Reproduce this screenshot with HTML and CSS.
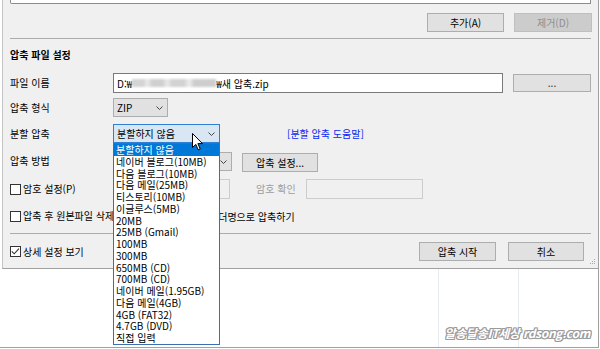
FILE: index.html
```html
<!DOCTYPE html>
<html lang="ko">
<head>
<meta charset="utf-8">
<title>압축 파일 설정</title>
<link rel="stylesheet" href="styles.css">
</head>
<body>
<div class="frame">
  <div class="dialog">
    <div class="listtail"></div>
    <div class="btnrow">
      <div class="btn w77">추가(A)</div>
      <div class="btn w78 disabled">제거(D)</div>
    </div>
    <div class="sep"></div>
    <div class="title">압축 파일 설정</div>
    <div class="form">
      <div class="lbl">파일 이름</div>
      <div class="ctl">
        <div class="input path">D:₩<span class="blur"></span>₩새 압축.zip</div>
        <div class="btn browse">...</div>
      </div>

      <div class="lbl">압축 형식</div>
      <div class="ctl">
        <div class="combo zip"><span>ZIP</span><svg class="chev" width="7" height="4" viewBox="0 0 7 4"><polyline points="0.5,0.5 3.5,3.5 6.5,0.5" fill="none" stroke="#444" stroke-width="1"/></svg></div>
      </div>

      <div class="lbl">분할 압축</div>
      <div class="ctl">
        <div class="combo split">
          <span>분할하지 않음</span><svg class="chev" width="7" height="4" viewBox="0 0 7 4"><polyline points="0.5,0.5 3.5,3.5 6.5,0.5" fill="none" stroke="#444" stroke-width="1"/></svg>
          <ul class="droplist">
            <li class="sel">분할하지 않음</li>
            <li>네이버 블로그(10MB)</li>
            <li>다음 블로그(10MB)</li>
            <li>다음 메일(25MB)</li>
            <li>티스토리(10MB)</li>
            <li>이글루스(5MB)</li>
            <li>20MB</li>
            <li>25MB (Gmail)</li>
            <li>100MB</li>
            <li>300MB</li>
            <li>650MB (CD)</li>
            <li>700MB (CD)</li>
            <li>네이버 메일(1.95GB)</li>
            <li>다음 메일(4GB)</li>
            <li>4GB (FAT32)</li>
            <li>4.7GB (DVD)</li>
            <li>직접 입력</li>
          </ul>
          <svg class="cursor" width="12" height="18" viewBox="0 0 12 18"><path d="M0.5 0.5 L0.5 14.5 L3.8 11.4 L6.2 16.8 L8.2 15.9 L5.9 10.6 L10.5 10.6 Z" fill="#fff" stroke="#000" stroke-width="1" stroke-linejoin="miter"/></svg>
        </div>
        <a class="help">[분할 압축 도움말]</a>
      </div>

      <div class="lbl">압축 방법</div>
      <div class="ctl">
        <div class="combo method"><span></span><svg class="chev" width="7" height="4" viewBox="0 0 7 4"><polyline points="0.5,0.5 3.5,3.5 6.5,0.5" fill="none" stroke="#444" stroke-width="1"/></svg></div>
        <div class="btn opt">압축 설정...</div>
      </div>

      <div class="lbl chk"><span class="cb"></span>암호 설정(P)</div>
      <div class="ctl">
        <div class="input dis pw1"></div>
        <div class="pwlbl">암호 확인</div>
        <div class="input dis pw2"></div>
      </div>

      <div class="lbl chk"><span class="cb"></span>압축 후 원본파일 삭제</div>
      <div class="ctl chk folder"><span class="cb"></span>폴더명으로 압축하기</div>
    </div>
    <div class="sep sep2"></div>
    <div class="footer">
      <div class="chk"><span class="cb on"><svg width="11" height="11" viewBox="0 0 11 11"><path d="M1.8 5.4 L4.2 7.8 L9 2.6" fill="none" stroke="#333" stroke-width="1.1"/></svg></span>상세 설정 보기</div>
      <div class="btns">
        <div class="btn w77">압축 시작</div>
        <div class="btn w76">취소</div>
      </div>
      <svg class="grip" width="6" height="6" viewBox="0 0 6 6"><rect x="4" y="0" width="1" height="1" fill="#a8a8a8"/><rect x="2" y="2" width="1" height="1" fill="#a8a8a8"/><rect x="4" y="2" width="1" height="1" fill="#a8a8a8"/><rect x="0" y="4" width="1" height="1" fill="#a8a8a8"/><rect x="2" y="4" width="1" height="1" fill="#a8a8a8"/><rect x="4" y="4" width="1" height="1" fill="#a8a8a8"/></svg>
    </div>
  </div>
  <div class="below">
    <div class="col c1"></div>
    <div class="col c2"></div>
    <div class="col c3"></div>
    <div class="watermark">알송달송IT세상 rdsong.com</div>
  </div>
</div>
</body>
</html>
```

FILE: styles.css
```css
* { box-sizing: border-box; }
html, body { margin: 0; padding: 0; background: #fff; }
body {
  font-family: "Noto Sans CJK KR", "Noto Sans", sans-serif;
  font-size: 10px;
  color: #000;
  width: 600px;
  height: 349px;
  overflow: hidden;
}
.frame {
  width: 599px;
  height: 348px;
  border-right: 1px solid #a0a0a0;
  border-bottom: 1px solid #a0a0a0;
  display: flex;
  flex-direction: column;
  position: relative;
}
.dialog {
  margin-left: 2px;
  height: 269px;
  background: #f0f0f0;
  border-left: 1px solid #c4c4c4;
  border-bottom: 1px solid #a0a0a0;
  padding: 0 6px 0 7px;
  display: flex;
  flex-direction: column;
  position: relative;
}
.listtail {
  width: 581px;
  height: 4px;
  background: #fff;
  border: 1px solid #8c8c8c;
  border-top: none;
  border-bottom-left-radius: 2px;
}
.btnrow {
  margin-top: 9px;
  display: flex;
  justify-content: flex-end;
  gap: 10px;
}
.btn {
  height: 19px;
  background: #e1e1e1;
  border: 1px solid #adadad;
  display: flex;
  align-items: center;
  justify-content: center;
  line-height: 1;
  white-space: nowrap;
}
.btn.disabled {
  background: #cccccc;
  border-color: #bfbfbf;
  color: #8d8d8d;
}
.w76 { width: 76px; }
.w77 { width: 77px; }
.w78 { width: 78px; }
.sep {
  margin-top: 6px;
  height: 1px;
  background: #acacac;
  width: 581px;
}
.title {
  margin-top: 9px;
  font-weight: 700;
  line-height: 14px;
  height: 14px;
}
.form {
  margin-top: 11px;
  display: grid;
  grid-template-columns: 103px 478px;
  grid-template-rows: 25px 26px 27px 28px 27px 20px;
}
.lbl {
  height: 20px;
  line-height: 20px;
  white-space: nowrap;
}
.ctl {
  display: flex;
  align-items: flex-start;
  height: 20px;
}
.input {
  height: 20px;
  background: #fff;
  border: 1px solid #7a7a7a;
  display: flex;
  align-items: center;
  padding-left: 3px;
  white-space: nowrap;
}
.path { width: 390px; }
.blur {
  display: inline-block;
  width: 84px;
  height: 8px;
  background: linear-gradient(90deg, #d4d4d4 0 14%, #ececec 18%, #cfcfcf 24% 36%, #e9e9e9 42%, #d2d2d2 48% 62%, #eeeeee 68%, #cdcdcd 74% 100%);
  filter: blur(1.2px);
}
.browse {
  width: 78px;
  height: 18px;
  margin-left: 10px;
  margin-top: 1px;
  color: #333;
}
.combo {
  height: 19px;
  background: #e1e1e1;
  border: 1px solid #adadad;
  display: flex;
  align-items: center;
  justify-content: space-between;
  padding: 0 4px 0 3px;
  white-space: nowrap;
  position: relative;
}
.zip { width: 55px; }
.split {
  width: 107px;
  background: #d9e7f5;
  border-color: #2f7fd2;
}
.method { width: 119px; margin-top: 1px; }
.chev { flex: none; }
.droplist {
  position: absolute;
  left: -1px;
  top: 18px;
  width: 107px;
  margin: 0;
  padding: 0;
  list-style: none;
  background: #fff;
  border: 1px solid #3c6fb0;
  z-index: 10;
}
.droplist li {
  height: 11.75px;
  line-height: 11.75px;
  padding-left: 2px;
  white-space: nowrap;
}
.droplist li.sel {
  background: #0078d7;
  color: #fff;
}
.cursor {
  position: absolute;
  left: 78px;
  top: 8px;
  z-index: 20;
}
.help {
  margin-left: 67px;
  line-height: 20px;
  color: #0a28f0;
}
.opt {
  width: 76px;
  margin-left: 10px;
  margin-top: 2px;
}
.chk {
  display: flex;
  align-items: center;
  white-space: nowrap;
}
.cb {
  width: 11px;
  height: 11px;
  border: 1px solid #333;
  background: #fff;
  margin-right: 2px;
  flex: none;
  display: flex;
  align-items: center;
  justify-content: center;
}
.cb svg { display: block; margin: -1px; }
.dis {
  background: #f0f0f0;
  border-color: #cccccc;
}
.pw1 { width: 117px; }
.pwlbl {
  margin-left: 26px;
  width: 50px;
  line-height: 20px;
  color: #9d9d9d;
}
.pw2 { width: 117px; }
.folder {
  padding-left: 83px;
  height: 20px;
}
.sep2 { margin-top: 7px; }
.footer {
  margin-top: 8px;
  height: 19px;
  display: flex;
  align-items: center;
  justify-content: space-between;
  position: relative;
}
.footer .btns {
  display: flex;
  gap: 12px;
  margin-right: 8px;
}
.grip {
  position: absolute;
  right: -4px;
  bottom: -4px;
}
.below {
  flex: 1;
  display: flex;
  position: relative;
}
.col { height: 100%; }
.c1 { width: 438px; }
.c2 { width: 80px; border-left: 1px solid #e4ecf0; }
.c3 { flex: 1; border-left: 1px solid #e4ecf0; }
.watermark {
  position: absolute;
  right: 8px;
  top: 55px;
  font-size: 12px;
  font-weight: 700;
  font-style: italic;
  color: #fff;
  letter-spacing: -0.3px;
  white-space: nowrap;
  text-shadow: 1px 0 0 #9a9a9a, -1px 0 0 #9a9a9a, 0 1px 0 #9a9a9a, 0 -1px 0 #9a9a9a, 1px 1px 0 #9a9a9a, -1px -1px 0 #9a9a9a, 1px -1px 0 #9a9a9a, -1px 1px 0 #9a9a9a;
}
```
